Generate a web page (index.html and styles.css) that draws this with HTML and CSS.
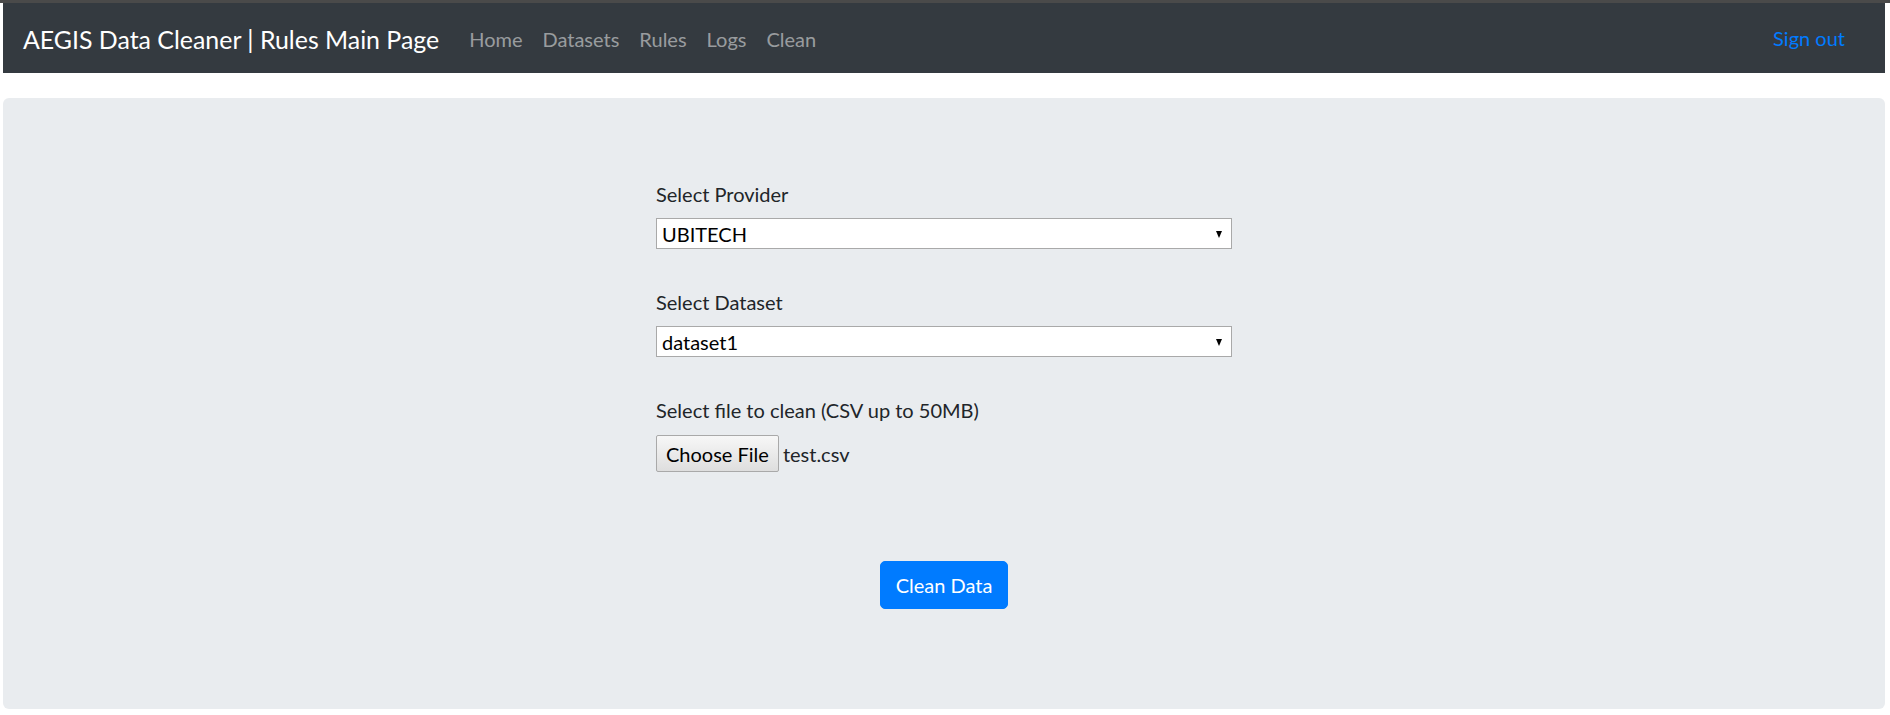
FILE: index.html
```html
<!DOCTYPE html>
<html lang="en">
<head>
<meta charset="utf-8">
<title>AEGIS Data Cleaner | Rules Main Page</title>
<link rel="stylesheet" href="styles.css">
</head>
<body>
<nav class="navbar">
  <a class="brand" href="#">AEGIS Data Cleaner | Rules Main Page</a>
  <ul class="nav">
    <li><a class="nav-link" href="#">Home</a></li>
    <li><a class="nav-link" href="#">Datasets</a></li>
    <li><a class="nav-link" href="#">Rules</a></li>
    <li><a class="nav-link" href="#">Logs</a></li>
    <li><a class="nav-link" href="#">Clean</a></li>
  </ul>
  <a class="signout" href="#">Sign out</a>
</nav>
<main class="jumbotron">
  <form class="form">
    <div class="group">
      <label class="label" for="provider">Select Provider</label>
      <div class="select-wrap">
        <select id="provider" class="select"><option>UBITECH</option></select>
      </div>
    </div>
    <div class="group">
      <label class="label" for="dataset">Select Dataset</label>
      <div class="select-wrap">
        <select id="dataset" class="select"><option>dataset1</option></select>
      </div>
    </div>
    <div class="group group-file">
      <span class="label">Select file to clean (CSV up to 50MB)</span>
      <div class="file-row">
        <span class="file-btn">Choose File</span>
        <span class="file-name">test.csv</span>
      </div>
    </div>
    <div class="actions">
      <button type="button" class="btn">Clean Data</button>
    </div>
  </form>
</main>
</body>
</html>
```

FILE: styles.css
```css
html, body {
  margin: 0;
  padding: 0;
}
body {
  border-top: 3px solid #4a4a4a;
  padding: 0 5px 0 3px;
  background: #ffffff;
  font-family: Lato, "Open Sans", "Liberation Sans", sans-serif;
  font-size: 20px;
  line-height: 30px;
  color: #212529;
}
a { text-decoration: none; }

.navbar {
  display: flex;
  align-items: center;
  height: 70px;
  padding: 0 20px;
  background: #343a40;
}
.brand {
  color: #ffffff;
  font-size: 24.9px;
  line-height: 38px;
  margin-right: 20px;
  padding-top: 2px;
}
.nav {
  display: flex;
  list-style: none;
  margin: 0;
  padding: 0;
}
.nav-link {
  display: block;
  padding: 0 10px;
  color: rgba(255, 255, 255, 0.5);
  line-height: 30px;
  padding-top: 2px;
}
.signout {
  margin-left: auto;
  margin-right: 20px;
  color: #007bff;
  line-height: 30px;
}

.jumbotron {
  margin-top: 25px;
  background: #e9ecef;
  border-radius: 6px;
  padding: 81px 40px 100px;
  display: flex;
  justify-content: center;
}
.form {
  width: 576px;
}
.group {
  margin-bottom: 38px;
}
.group-file {
  margin-bottom: 0;
}
.label {
  display: block;
  margin-bottom: 9px;
}
.group-file .label {
  margin-bottom: 10px;
}
.select-wrap {
  position: relative;
}
.select-wrap::after {
  content: "";
  position: absolute;
  right: 10px;
  top: 13px;
  border-left: 3.5px solid transparent;
  border-right: 3.5px solid transparent;
  border-top: 7px solid #000000;
}
.select {
  display: block;
  width: 100%;
  height: 31px;
  margin: 0;
  padding: 0 24px 0 5px;
  -webkit-appearance: none;
  appearance: none;
  background: #ffffff;
  border: 1px solid #a9a9a9;
  border-radius: 0;
  font-family: inherit;
  font-size: 20px;
  color: #000000;
}
.file-row {
  display: flex;
  align-items: center;
  gap: 4px;
}
.file-btn {
  display: inline-flex;
  align-items: center;
  height: 35px;
  padding: 0 9px;
  border: 1px solid #a9a9a9;
  border-radius: 2px;
  background: linear-gradient(#f7f7f7, #dedede);
  color: #000000;
}
.file-name {
  color: #212529;
}
.actions {
  display: flex;
  justify-content: center;
  margin-top: 89px;
}
.btn {
  height: 48px;
  padding: 0 15px;
  border: 1px solid #007bff;
  border-radius: 5px;
  background: #007bff;
  color: #ffffff;
  font-family: inherit;
  font-size: 20px;
  line-height: 30px;
  cursor: pointer;
}
```
